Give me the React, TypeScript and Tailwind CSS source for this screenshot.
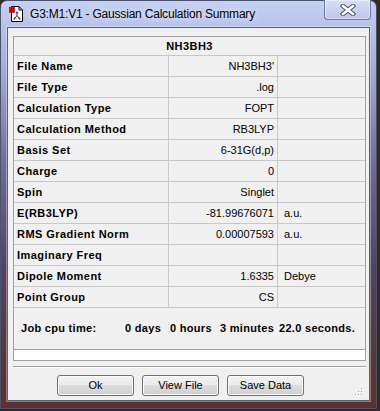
const rows: { label: string; value: string; unit?: string }[] = [
  { label: "File Name", value: "NH3BH3'" },
  { label: "File Type", value: ".log" },
  { label: "Calculation Type", value: "FOPT" },
  { label: "Calculation Method", value: "RB3LYP" },
  { label: "Basis Set", value: "6-31G(d,p)" },
  { label: "Charge", value: "0" },
  { label: "Spin", value: "Singlet" },
  { label: "E(RB3LYP)", value: "-81.99676071", unit: "a.u." },
  { label: "RMS Gradient Norm", value: "0.00007593", unit: "a.u." },
  { label: "Imaginary Freq", value: "" },
  { label: "Dipole Moment", value: "1.6335", unit: "Debye" },
  { label: "Point Group", value: "CS" },
];

function AppIcon() {
  return (
    <svg width="15" height="16" viewBox="0 0 15 16" className="shrink-0">
      <path d="M2.5 0.5 H10 L13.5 4 V15.5 H2.5 Z" fill="#fff" stroke="#000" />
      <path d="M10 0.5 V4 H13.5" fill="none" stroke="#000" />
      <rect x="0.5" y="1.5" width="5" height="5" fill="#e00000" stroke="#900" strokeWidth="0.6" />
      <path d="M8 6.5 V9.5 M8 9.5 L5.5 12.5 M8 9.5 L10.5 12.5" stroke="#333" strokeWidth="1" />
      <circle cx="8" cy="6.5" r="1" fill="#333" />
      <circle cx="5.5" cy="12.5" r="1" fill="#333" />
      <circle cx="10.5" cy="12.5" r="1" fill="#333" />
    </svg>
  );
}

function CloseGlyph() {
  return (
    <svg width="16" height="12" viewBox="0 0 16 12">
      <path d="M3 2 L13 10 M13 2 L3 10" stroke="#4a5068" strokeWidth="4.5" strokeLinecap="square" />
      <path d="M3 2 L13 10 M13 2 L3 10" stroke="#fff" strokeWidth="2.5" strokeLinecap="square" />
    </svg>
  );
}

function SizeGrip() {
  const dots = [
    [8, 0],
    [8, 3],
    [5, 3],
    [8, 6],
    [5, 6],
    [2, 6],
  ];
  return (
    <svg width="10" height="9" viewBox="0 0 10 9">
      {dots.map(([x, y]) => (
        <g key={`${x}-${y}`}>
          <rect x={x + 1} y={y + 1} width="1" height="1" fill="#fff" />
          <rect x={x} y={y} width="1" height="1" fill="#a0a0a0" />
        </g>
      ))}
    </svg>
  );
}

function WinButton({ children }: { children: string }) {
  return (
    <button
      type="button"
      className="h-[21px] w-[77px] rounded-[3px] border border-[#707070] bg-[linear-gradient(#f2f2f2_0%,#ebebeb_45%,#dddddd_50%,#cfcfcf_100%)] text-[11px] text-black shadow-[inset_0_0_0_1px_#fcfcfc]"
    >
      {children}
    </button>
  );
}

export default function App() {
  return (
    <div className="h-[411px] w-[380px] bg-[#3a2722] font-['Liberation_Sans',Arial,sans-serif]">
      <div className="flex h-[409px] w-[377px] flex-col rounded-t-[7px] border border-[#4a5470] bg-[linear-gradient(#c6d0f3_0%,#b6c1ea_7%,#9ea3cf_20%,#706c96_40%,#514462_65%,#553a3c_85%,#5a302a_100%)] px-[6px] pb-[7px]">
        {/* title bar */}
        <div className="relative flex h-[26px] shrink-0 items-center gap-[6px] pl-[2px]">
          <AppIcon />
          <span className="text-[12px] tracking-[-0.2px] text-black [text-shadow:0_0_6px_rgba(255,255,255,0.9)]">
            G3:M1:V1 - Gaussian Calculation Summary
          </span>
          <div className="absolute right-[-1px] top-[-1px] flex h-[20px] w-[47px] items-center justify-center rounded-b-[4px] border border-t-0 border-[#6c79a6] bg-[linear-gradient(#d8def6,#bcc6ec)] shadow-[inset_0_0_0_1px_rgba(255,255,255,0.45)]">
            <CloseGlyph />
          </div>
        </div>

        {/* client area */}
        <div className="relative flex-1 border border-[#55617f] bg-[#f0f0f0] shadow-[0_0_0_1px_rgba(255,255,255,0.35)]">
          <div className="ml-[5px] mt-[8px] w-[353px] border border-[#a0a0a0] bg-[#f0f0f0] text-[11px] text-black">
            <div className="flex h-[19px] items-center justify-center border-b border-[#c8c8c8] font-bold tracking-[0.45px]">
              NH3BH3
            </div>
            {rows.map((r) => (
              <div key={r.label} className="flex h-[21px] border-b border-[#c8c8c8]">
                <div className="flex w-[155px] items-center border-r border-[#c8c8c8] pl-[3px] font-bold tracking-[0.45px]">
                  {r.label}
                </div>
                <div className="flex w-[109px] items-center justify-end border-r border-[#c8c8c8] pr-[3px]">
                  {r.value}
                </div>
                <div className="flex flex-1 items-center pl-[6px]">{r.unit}</div>
              </div>
            ))}
            <div className="flex h-[42px] items-center border-b border-[#a0a0a0] pl-[7px] font-bold tracking-[0.3px]">
              <span className="w-[104px]">Job cpu time:</span>
              <span className="w-[45px]">0 days</span>
              <span className="w-[50px]">0 hours</span>
              <span className="w-[59px]">3 minutes</span>
              <span>22.0 seconds.</span>
            </div>
            <div className="h-[10px] bg-white" />
          </div>

          <div className="ml-[5px] mt-[5px] h-[2px] w-[353px] border-t border-[#a0a0a0] bg-white" />

          <div className="ml-[49px] mt-[7px] flex gap-[8px]">
            <WinButton>Ok</WinButton>
            <WinButton>View File</WinButton>
            <WinButton>Save Data</WinButton>
          </div>

          <div className="absolute bottom-[3px] right-[6px]">
            <SizeGrip />
          </div>
        </div>
      </div>
    </div>
  );
}
